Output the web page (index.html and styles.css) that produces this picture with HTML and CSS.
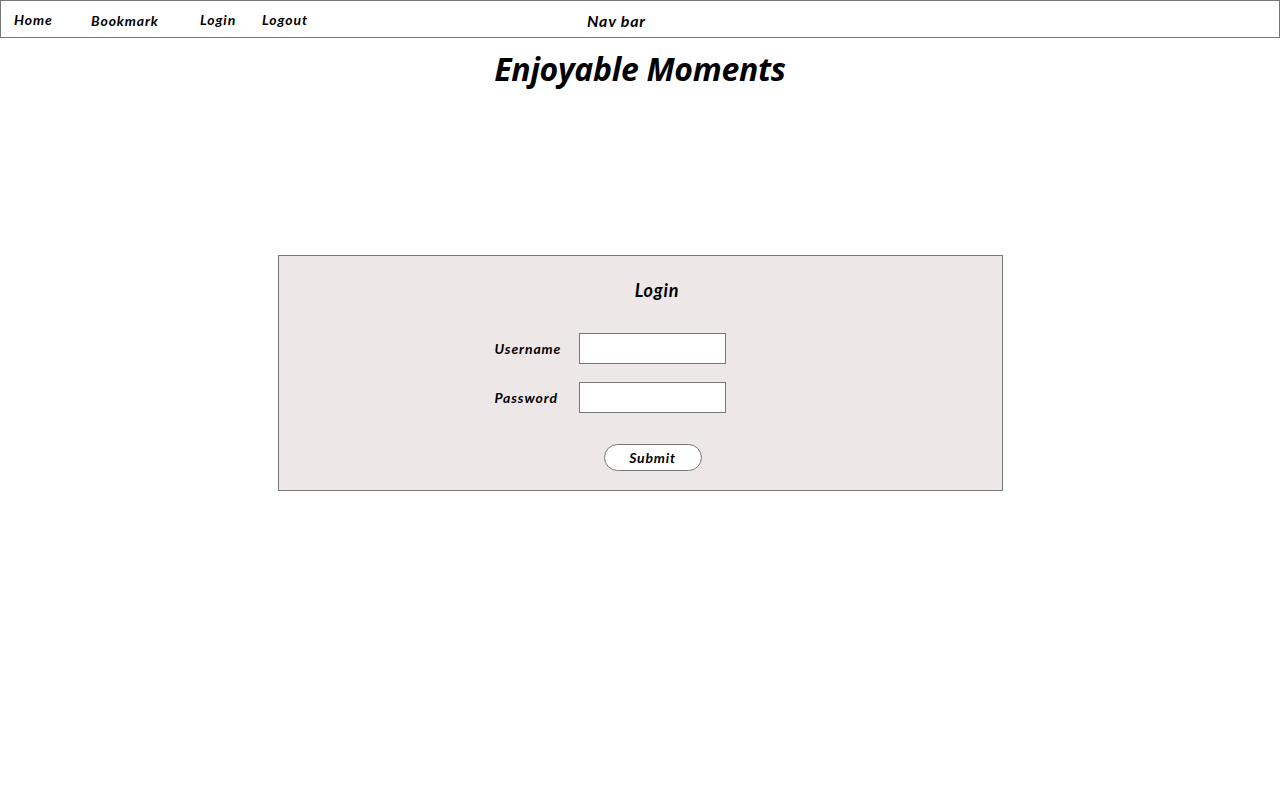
FILE: index.html
```html
<!DOCTYPE html>
<html>
<head>
<meta charset="utf-8">
<link rel="stylesheet" href="styles.css">
</head>
<body>
<nav class="navbar">
  <a class="nav-item w-home">Home</a>
  <a class="nav-item w-bookmark">Bookmark</a>
  <a class="nav-item w-login">Login</a>
  <a class="nav-item w-logout">Logout</a>
  <span class="nav-label">Nav bar</span>
</nav>
<h1 class="title">Enjoyable Moments</h1>
<main class="content">
  <section class="login-box">
    <h2 class="login-heading">Login</h2>
    <form class="login-form">
      <label class="field-label">Username</label>
      <input class="field-input" type="text">
      <label class="field-label">Password</label>
      <input class="field-input" type="password">
      <button class="submit-btn" type="button">Submit</button>
    </form>
  </section>
</main>
</body>
</html>
```

FILE: styles.css
```css
* { box-sizing: border-box; }
html, body { margin: 0; padding: 0; background: #fff; }
body {
  font-family: Lato, "Open Sans", sans-serif;
  font-style: italic;
  font-weight: 700;
  color: #000;
}
.navbar {
  display: flex;
  align-items: center;
  height: 38px;
  border: 1px solid #777;
  padding-left: 13px;
}
.nav-item {
  font-size: 14px;
  line-height: 1;
  color: #000;
  letter-spacing: 0.9px;
  position: relative;
  top: 1px;
}
.w-home { width: 77px; }
.w-bookmark { width: 109px; top: 2px; }
.w-login { width: 62px; }
.w-logout { width: 325px; }
.nav-label {
  font-size: 16px;
  line-height: 1;
  letter-spacing: 0.8px;
  position: relative;
  top: 2px;
}
.title {
  margin: 0;
  text-align: center;
  font-family: "Open Sans", Lato, sans-serif;
  font-size: 32px;
  font-weight: 700;
  font-style: italic;
  line-height: 1;
  padding-top: 15px;
  letter-spacing: -0.3px;
}
.content {
  padding-top: 170px;
  display: flex;
  justify-content: center;
}
.login-box {
  width: 725px;
  height: 236px;
  background: #ede7e7;
  border: 1px solid #777;
  padding-top: 23px;
}
.login-heading {
  margin: 0;
  text-align: center;
  padding-left: 34px;
  font-size: 18px;
  line-height: 22px;
  font-weight: 700;
  font-style: italic;
  letter-spacing: 0.8px;
}
.login-form {
  margin: 32px 0 0 216px;
  display: grid;
  grid-template-columns: 84px 147px;
  row-gap: 18px;
  align-items: center;
}
.field-label {
  font-size: 14px;
  line-height: 1;
  letter-spacing: 0.9px;
}
.field-input {
  width: 147px;
  height: 31px;
  border: 1px solid #777;
  background: #fff;
  margin: 0;
}
.submit-btn {
  grid-column: 1 / 3;
  margin: 13px 0 0 109px;
  width: 98px;
  height: 27px;
  border: 1px solid #777;
  border-radius: 14px;
  background: #fff;
  font-family: Lato, "Open Sans", sans-serif;
  font-style: italic;
  font-weight: 700;
  font-size: 14px;
  letter-spacing: 0.8px;
  color: #000;
  padding: 0;
  justify-self: start;
}
```
